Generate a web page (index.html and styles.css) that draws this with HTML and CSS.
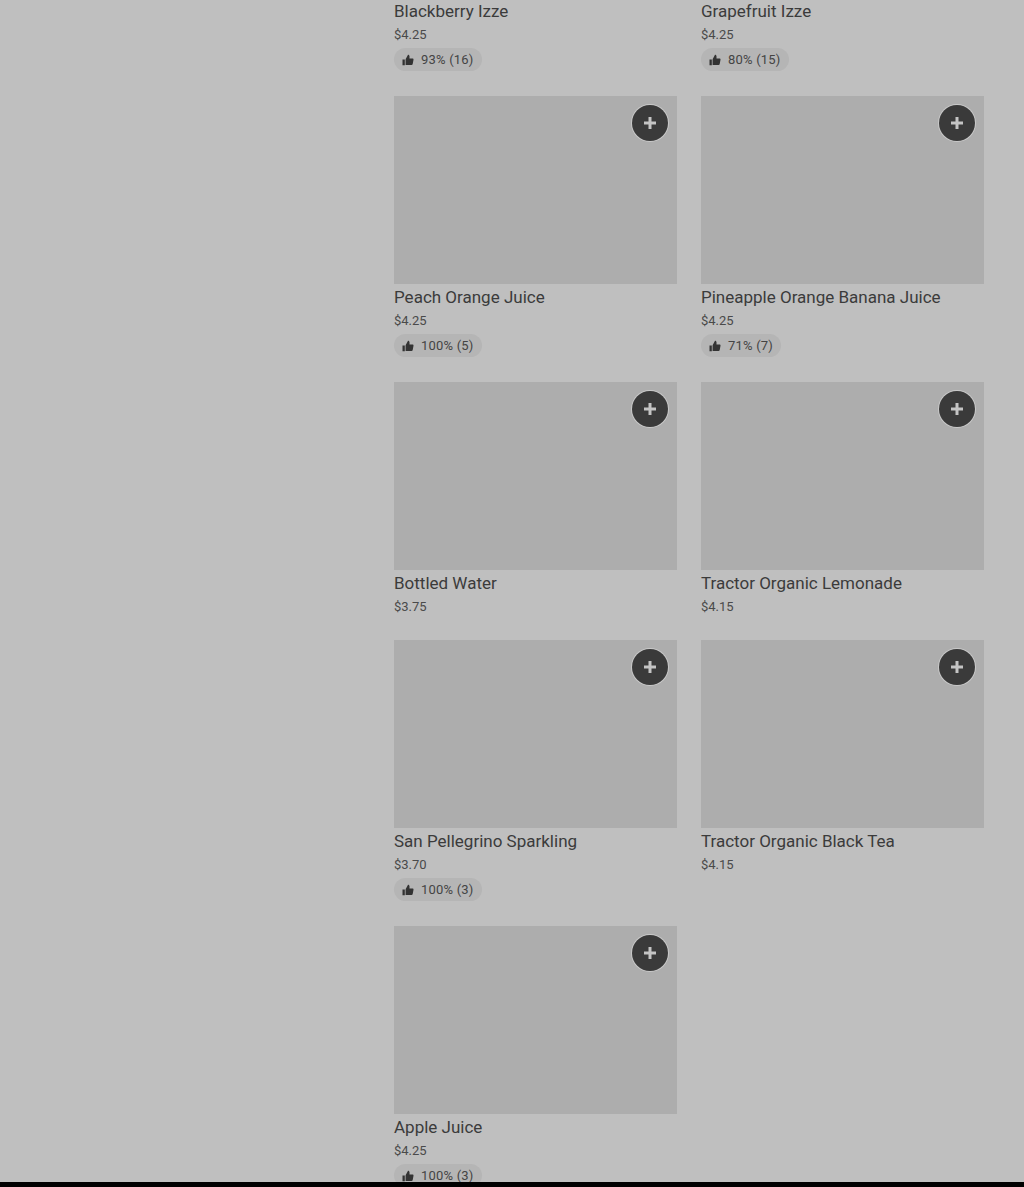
FILE: index.html
```html
<!DOCTYPE html>
<html lang="en">
<head>
    <meta charset="UTF-8">
    <meta name="viewport" content="width=device-width, initial-scale=1.0">
    <title>Drinks</title>
    <link rel="stylesheet" href="styles.css">
</head>
<body>
    <svg class="icon-defs" width="0" height="0">
        <symbol id="thumb" viewBox="0 0 12 12">
            <path d="M0.5 5.5h2.3v5.7H0.5z M3.6 5.3L6 .8c.9 0 1.5.6 1.5 1.5v2.2h3c.7 0 1.1.6 1 1.2l-.8 4.4c-.1.6-.5 1-1.1 1H3.6z"/>
        </symbol>
        <symbol id="plus" viewBox="0 0 12 12">
            <path d="M4.5 0h3v4.5H12v3H7.500V12h-3V7.500H0v-3h4.500z"/>
        </symbol>
    </svg>

    <main class="menu">
        <div class="grid">
            <div class="item item-cut">
                <h3>Blackberry Izze</h3>
                <p class="price">$4.25</p>
                <span class="rating"><svg class="thumb"><use href="#thumb"/></svg>93% (16)</span>
            </div>
            <div class="item item-cut">
                <h3>Grapefruit Izze</h3>
                <p class="price">$4.25</p>
                <span class="rating"><svg class="thumb"><use href="#thumb"/></svg>80% (15)</span>
            </div>

            <div class="item">
                <div class="photo"><button class="add"><svg><use href="#plus"/></svg></button></div>
                <h3>Peach Orange Juice</h3>
                <p class="price">$4.25</p>
                <span class="rating"><svg class="thumb"><use href="#thumb"/></svg>100% (5)</span>
            </div>
            <div class="item">
                <div class="photo"><button class="add"><svg><use href="#plus"/></svg></button></div>
                <h3>Pineapple Orange Banana Juice</h3>
                <p class="price">$4.25</p>
                <span class="rating"><svg class="thumb"><use href="#thumb"/></svg>71% (7)</span>
            </div>

            <div class="item item-short">
                <div class="photo"><button class="add"><svg><use href="#plus"/></svg></button></div>
                <h3>Bottled Water</h3>
                <p class="price">$3.75</p>
            </div>
            <div class="item item-short">
                <div class="photo"><button class="add"><svg><use href="#plus"/></svg></button></div>
                <h3>Tractor Organic Lemonade</h3>
                <p class="price">$4.15</p>
            </div>

            <div class="item">
                <div class="photo"><button class="add"><svg><use href="#plus"/></svg></button></div>
                <h3>San Pellegrino Sparkling</h3>
                <p class="price">$3.70</p>
                <span class="rating"><svg class="thumb"><use href="#thumb"/></svg>100% (3)</span>
            </div>
            <div class="item">
                <div class="photo"><button class="add"><svg><use href="#plus"/></svg></button></div>
                <h3>Tractor Organic Black Tea</h3>
                <p class="price">$4.15</p>
            </div>

            <div class="item">
                <div class="photo"><button class="add"><svg><use href="#plus"/></svg></button></div>
                <h3>Apple Juice</h3>
                <p class="price">$4.25</p>
                <span class="rating"><svg class="thumb"><use href="#thumb"/></svg>100% (3)</span>
            </div>
        </div>
    </main>

    <div class="bottom-bar"></div>
</body>
</html>
```

FILE: styles.css
```css
html, body {
    height: 100%;
}
body {
    margin: 0;
    display: flex;
    flex-direction: column;
    overflow: hidden;
    font-family: Roboto, "Liberation Sans", sans-serif;
    color: #3b3b3b;
    background-color: #bfbfbf;
}
.icon-defs {
    position: absolute;
}
.menu {
    flex: 1;
    min-height: 0;
    overflow: hidden;
    padding: 0 40px 0 394px;
}
.grid {
    display: grid;
    grid-template-columns: 283px 283px;
    column-gap: 24px;
    margin-top: -2px;
}
.item {
    height: 286px;
}
.item-cut {
    height: 98px;
}
.item-short {
    height: 258px;
}
.photo {
    height: 188px;
    display: flex;
    justify-content: flex-end;
    padding: 9px;
    box-sizing: border-box;
    background-color: #adadad;
}
.add {
    width: 36px;
    height: 36px;
    padding: 0;
    border: none;
    border-radius: 50%;
    display: flex;
    align-items: center;
    justify-content: center;
    background-color: #3a3a3a;
    box-shadow: 0 0 0 1px #c9c9c9;
}
.add svg {
    width: 12px;
    height: 12px;
    fill: #c4c4c4;
}
h3 {
    margin: 0 0 2px;
    padding-top: 1px;
    font-size: 17px;
    line-height: 24px;
    font-weight: 400;
}
.price {
    margin: 0;
    font-size: 13px;
    line-height: 20px;
    color: #4a4a4a;
}
.rating {
    display: inline-flex;
    align-items: center;
    height: 23px;
    margin-top: 3px;
    padding: 0 8px;
    border-radius: 12px;
    font-size: 13px;
    letter-spacing: 0.2px;
    color: #444444;
    background-color: #b5b5b5;
}
.thumb {
    width: 12px;
    height: 12px;
    margin-right: 7px;
    fill: #333333;
}
.bottom-bar {
    flex: none;
    height: 5px;
    background-color: #000000;
}
```
